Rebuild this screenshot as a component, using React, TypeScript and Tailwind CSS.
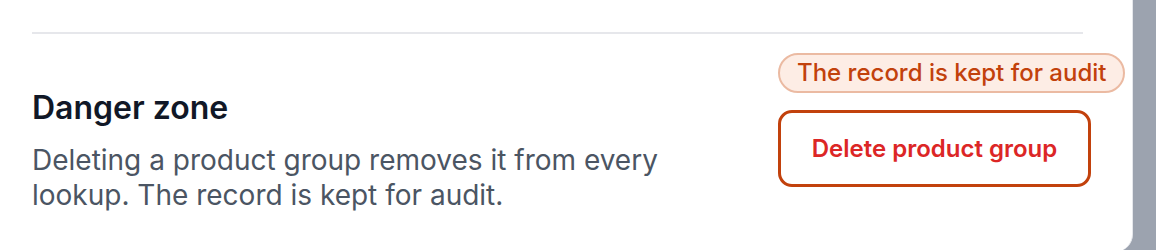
export default function App() {
  return (
    <div className="w-[1156px] h-[250px] overflow-hidden bg-[#9ca3af] font-['Inter','Noto_Sans',sans-serif]">
      <div className="w-[1133px] h-[252px] bg-white rounded-br-[18px] border-r border-[#e5e7eb]">
        <div className="pt-8 pl-8 pr-[49px]">
          <div className="h-[2px] bg-[#e6e7eb]" />
        </div>
        <div className="flex justify-between pl-8 pr-[41px] pt-[19px]">
          <div className="pt-[35px]">
            <h2 className="text-[32px] leading-[40px] font-semibold text-[#111827]">Danger zone</h2>
            <p className="mt-[15px] w-[680px] text-[28px] leading-[35px] text-[#4b5563]">
              Deleting a product group removes it from every lookup. The record is kept for audit.
            </p>
          </div>
          <div className="w-[313px] flex flex-col items-start gap-[17px]">
            <span className="whitespace-nowrap rounded-full border-2 border-[#ebbaa2] bg-[#fdede5] px-[17px] h-[40px] flex items-center text-[24px] font-medium text-[#c2410c]">
              The record is kept for audit
            </span>
            <button
              type="button"
              className="w-[313px] h-[77px] rounded-[14px] border-[3px] border-[#c2410c] bg-white text-[24px] font-semibold text-[#dc2626]"
            >
              Delete product group
            </button>
          </div>
        </div>
      </div>
    </div>
  );
}
